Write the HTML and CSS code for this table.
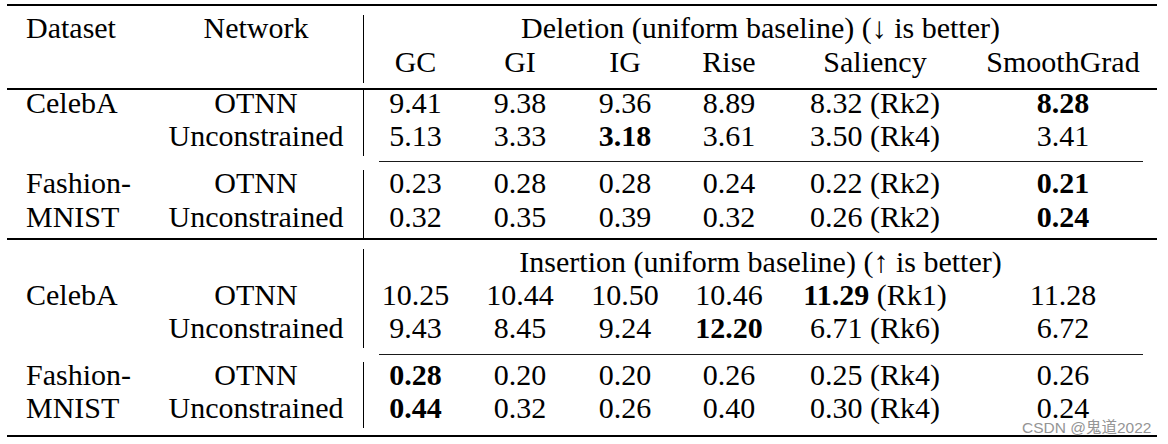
FILE: index.html
```html
<!DOCTYPE html>
<html lang="en">
<head>
<meta charset="utf-8">
<title>Deletion / Insertion results</title>
<link rel="stylesheet" href="styles.css">
</head>
<body>
<div class="page">
  <div class="tbl">
    <div class="block b-head">
      <div class="c lab">Dataset</div>
      <div class="c">Network</div>
      <div class="c span vl">Deletion (uniform baseline) (↓ is better)</div>
      <div class="c"></div>
      <div class="c"></div>
      <div class="c vl">GC</div>
      <div class="c">GI</div>
      <div class="c">IG</div>
      <div class="c">Rise</div>
      <div class="c">Saliency</div>
      <div class="c">SmoothGrad</div>
    </div>
    <div class="rule"></div>
    <div class="block b1">
      <div class="c lab">CelebA</div>
      <div class="c">OTNN</div>
      <div class="c vl">9.41</div>
      <div class="c">9.38</div>
      <div class="c">9.36</div>
      <div class="c">8.89</div>
      <div class="c">8.32 (Rk2)</div>
      <div class="c bf">8.28</div>
      <div class="c lab"></div>
      <div class="c">Unconstrained</div>
      <div class="c vl">5.13</div>
      <div class="c">3.33</div>
      <div class="c bf">3.18</div>
      <div class="c">3.61</div>
      <div class="c">3.50 (Rk4)</div>
      <div class="c">3.41</div>
    </div>
    <div class="cmid"></div>
    <div class="block b2">
      <div class="c lab">Fashion-</div>
      <div class="c">OTNN</div>
      <div class="c vl">0.23</div>
      <div class="c">0.28</div>
      <div class="c">0.28</div>
      <div class="c">0.24</div>
      <div class="c">0.22 (Rk2)</div>
      <div class="c bf">0.21</div>
      <div class="c lab">MNIST</div>
      <div class="c">Unconstrained</div>
      <div class="c vl">0.32</div>
      <div class="c">0.35</div>
      <div class="c">0.39</div>
      <div class="c">0.32</div>
      <div class="c">0.26 (Rk2)</div>
      <div class="c bf">0.24</div>
    </div>
    <div class="rule"></div>
    <div class="block b3">
      <div class="c lab"></div>
      <div class="c"></div>
      <div class="c span vl">Insertion (uniform baseline) (↑ is better)</div>
      <div class="c lab">CelebA</div>
      <div class="c">OTNN</div>
      <div class="c vl">10.25</div>
      <div class="c">10.44</div>
      <div class="c">10.50</div>
      <div class="c">10.46</div>
      <div class="c"><span class="bf">11.29</span> (Rk1)</div>
      <div class="c">11.28</div>
      <div class="c lab"></div>
      <div class="c">Unconstrained</div>
      <div class="c vl">9.43</div>
      <div class="c">8.45</div>
      <div class="c">9.24</div>
      <div class="c bf">12.20</div>
      <div class="c">6.71 (Rk6)</div>
      <div class="c">6.72</div>
    </div>
    <div class="cmid"></div>
    <div class="block b4">
      <div class="c lab">Fashion-</div>
      <div class="c">OTNN</div>
      <div class="c vl bf">0.28</div>
      <div class="c">0.20</div>
      <div class="c">0.20</div>
      <div class="c">0.26</div>
      <div class="c">0.25 (Rk4)</div>
      <div class="c">0.26</div>
      <div class="c lab">MNIST</div>
      <div class="c">Unconstrained</div>
      <div class="c vl bf">0.44</div>
      <div class="c">0.32</div>
      <div class="c">0.26</div>
      <div class="c">0.40</div>
      <div class="c">0.30 (Rk4)</div>
      <div class="c">0.24</div>
    </div>
  </div>
  <div class="wm">CSDN @鬼道2022</div>
</div>
</body>
</html>
```

FILE: styles.css
```css
html, body {
  margin: 0;
  padding: 0;
  background: #ffffff;
}

body {
  font-family: "Liberation Serif", "Times New Roman", serif;
  color: #000000;
}

.page {
  position: relative;
  width: 1168px;
  height: 444px;
  overflow: hidden;
}

.tbl {
  margin: 4px 0 0 7px;
  width: 1150px;
  border-top: 2px solid #000;
  border-bottom: 2px solid #000;
}

.block {
  display: grid;
  grid-template-columns: 142px 214px 104px 106px 104px 104px 188px 188px;
  font-size: 30px;
  line-height: 26px;
}

.c {
  text-align: center;
  white-space: nowrap;
}

.lab {
  text-align: left;
  padding-left: 19px;
}

.vl {
  border-left: 1px solid #000;
}

.span {
  grid-column: 3 / 9;
}

.bf {
  font-weight: bold;
}

.rule {
  height: 2px;
  background: #000;
}

.cmid {
  height: 1px;
  background: #1a1a1a;
  margin: 0 14px 0 372px;
}

.b-head {
  padding: 9px 0 5px;
  grid-template-rows: 34px 34px;
}

.b1 {
  padding: 0 0 5px;
  grid-template-rows: 33px 33px;
}

.b2 {
  padding: 8px 0 0;
  grid-template-rows: 34px 34px;
}

.b3 {
  padding: 9px 0 6px;
  grid-template-rows: 33px 33px 33px;
}

.b4 {
  padding: 7px 0 7px;
  grid-template-rows: 33px 33px;
}

.wm {
  position: absolute;
  left: 1022px;
  top: 422px;
  font-family: "Liberation Sans", "Noto Sans CJK SC", sans-serif;
  font-size: 15.5px;
  line-height: 12px;
  color: #959595;
  white-space: nowrap;
  text-shadow: 0 0 1px #fff;
}
```
